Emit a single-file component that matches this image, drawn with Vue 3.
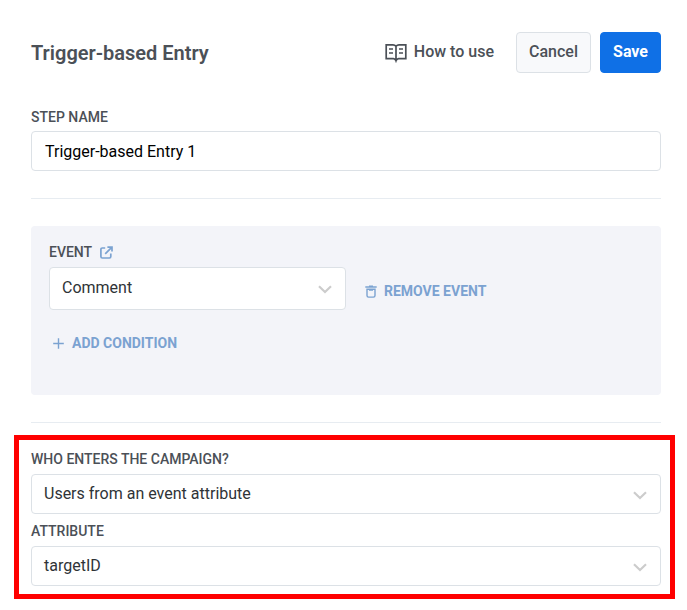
<script setup>
import { ref } from 'vue'

const stepName = ref('Trigger-based Entry 1')
const audience = [
  { label: 'Who enters the campaign?', value: 'Users from an event attribute' },
  { label: 'Attribute', value: 'targetID' },
]
</script>

<template>
  <main class="editor">
    <header class="header">
      <h1 class="title">Trigger-based Entry</h1>
      <a class="help">
        <svg width="22" height="20" viewBox="0 0 22 20" fill="none" stroke="currentColor">
          <path d="M11 3.2Q9.8 1.8 8 1.8H1.2V15.6H8.4Q10.2 15.6 11 17.8Q11.8 15.6 13.6 15.6H20.8V1.8H14Q12.2 1.8 11 3.2V17.5" stroke-width="1.7" />
          <path d="M4 6H8M4 10H8M14 6H18M14 10H18" stroke-width="1.5" />
        </svg>
        <span>How to use</span>
      </a>
      <button class="button cancel">Cancel</button>
      <button class="button save">Save</button>
    </header>

    <section class="step">
      <label class="label" for="step-name">Step name</label>
      <input id="step-name" v-model="stepName" class="input" type="text" />
    </section>

    <hr class="divider" />

    <section class="panel">
      <div class="label event-label">
        <span>Event</span>
        <svg width="13" height="13" viewBox="0 0 13 13" fill="none" stroke="#7ba2d1" stroke-width="1.7">
          <path d="M5.2 2H2.3Q.9 2 .9 3.4V10.6Q.9 12 2.3 12H9.4Q10.8 12 10.8 10.6V7.6M7.4 1.1H12V5.6M11.7 1.4L5.2 7.9" />
        </svg>
      </div>
      <div class="event-row">
        <div class="select event-select">
          <span>Comment</span>
          <svg class="chevron" width="14" height="9" viewBox="0 0 14 9"><path d="M1 1.3L7 7L13 1.3" /></svg>
        </div>
        <a class="action">
          <svg width="12" height="13" viewBox="0 0 12 13" fill="none" stroke="currentColor" stroke-width="1.4">
            <path d="M.3 2H11.7M4 1.1H8M2 4.3V10.6Q2 12.1 3.5 12.1H8.5Q10 12.1 10 10.6V4.3ZM4 5H8" />
          </svg>
          <span>Remove event</span>
        </a>
      </div>
      <a class="action add">
        <svg width="11" height="11" viewBox="0 0 11 11" stroke="currentColor" stroke-width="1.4">
          <path d="M5.5 .2V10.8M.2 5.5H10.8" />
        </svg>
        <span>Add condition</span>
      </a>
    </section>

    <hr class="divider" />

    <section class="audience">
      <div v-for="field in audience" :key="field.label" class="field">
        <div class="label">{{ field.label }}</div>
        <div class="select">
          <span>{{ field.value }}</span>
          <svg class="chevron" width="14" height="9" viewBox="0 0 14 9"><path d="M1 1.3L7 7L13 1.3" /></svg>
        </div>
      </div>
    </section>
  </main>
</template>

<style>
body {
  background: #fff;
}
</style>

<style scoped>
.editor,
.editor * {
  box-sizing: border-box;
}

.editor {
  width: 687px;
  height: 610px;
  padding: 32px 26px 0 31px;
  overflow: hidden;
  font-family: Roboto, sans-serif;
  font-size: 16px;
  color: #2f3337;
}

.header {
  display: flex;
  align-items: center;
  height: 41px;
  color: #4b5057;
}

.title {
  margin: 0 auto 0 0;
  font-size: 20px;
  font-weight: 600;
  line-height: 24px;
}

.help {
  display: flex;
  align-items: center;
  gap: 7px;
  margin-right: 22px;
  font-weight: 500;
  line-height: 20px;
}

.help span {
  margin-top: -2px;
}

.help svg {
  margin-top: 1px;
}

.button {
  height: 41px;
  padding: 0 0 2px;
  border: 1px solid #dce1e6;
  border-radius: 4px;
  font: 500 16px/20px Roboto, sans-serif;
}

.cancel {
  width: 75px;
  margin-right: 9px;
  background: #f8f9fb;
  color: #4b5057;
}

.save {
  width: 61px;
  border-color: #0f70e6;
  background: #0f70e6;
  color: #fff;
  font-weight: 700;
}

.step {
  margin-top: 36px;
}

.label {
  display: block;
  height: 22px;
  font-size: 14px;
  font-weight: 500;
  line-height: 17px;
  color: #4b5057;
  text-transform: uppercase;
}

.input {
  display: block;
  width: 100%;
  height: 40px;
  padding: 0 13px;
  border: 1px solid #dce1e6;
  border-radius: 4px;
  font: 400 16px/20px Roboto, sans-serif;
  color: #000;
}

.divider {
  height: 1px;
  margin: 27px 0;
  border: 0;
  background: #e7ecf1;
}

.panel {
  height: 169px;
  padding: 18px;
  border-radius: 4px;
  background: #f3f4f9;
}

.event-label {
  display: flex;
  gap: 8px;
  height: 23px;
}

.event-label svg {
  margin-top: 2px;
}

.select {
  display: flex;
  align-items: center;
  justify-content: space-between;
  height: 40px;
  padding: 0 13px 2px 12px;
  border: 1px solid #dce1e6;
  border-radius: 4px;
  background: #fff;
}

.chevron {
  margin-top: 4px;
  fill: none;
  stroke: #ccc;
  stroke-width: 2.2;
}

.event-row {
  display: flex;
  gap: 19px;
}

.event-select {
  width: 297px;
  height: 43px;
}

.action {
  display: flex;
  align-items: center;
  gap: 7px;
  padding-top: 5px;
  font-size: 14px;
  font-weight: 700;
  line-height: 17px;
  color: #7ba2d1;
  text-transform: uppercase;
}

.add {
  gap: 8px;
  margin-top: 25px;
  padding: 0 0 0 4px;
}

.audience {
  display: flex;
  flex-direction: column;
  gap: 9px;
  width: 661px;
  height: 164px;
  margin: -15px 0 0 -17px;
  padding: 11px 9px 0 12px;
  border: 5px solid #f00;
}

.audience .label {
  height: 23px;
}
</style>
